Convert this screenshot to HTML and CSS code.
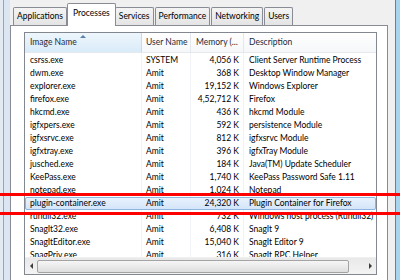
FILE: index.html
```html
<!DOCTYPE html>
<html lang="en">
<head>
    <meta charset="UTF-8">
    <title>Windows Task Manager - Processes</title>
    <link rel="stylesheet" href="styles.css">
</head>
<body>

<div class="window">
    <div class="frame-left"></div>

    <div class="main">
        <div class="tabs">
            <div class="tab">Applications</div>
            <div class="tab active">Processes</div>
            <div class="tab">Services</div>
            <div class="tab">Performance</div>
            <div class="tab">Networking</div>
            <div class="tab">Users</div>
        </div>

        <div class="panel">
            <div class="listview">
                <div class="lv-head">
                    <div class="hcol sorted">Image Name<span class="sort-arrow"></span></div>
                    <div class="hcol">User Name</div>
                    <div class="hcol">Memory (...</div>
                    <div class="hcol">Description</div>
                </div>

                <div class="lv-body" id="rows"></div>

                <div class="hscroll">
                    <span class="arrow arrow-left"></span>
                    <div class="track"><div class="thumb"></div></div>
                    <span class="arrow arrow-right"></span>
                </div>
            </div>
        </div>
    </div>

    <div class="frame-right"></div>
</div>

<!-- annotation lines drawn over the selected process -->
<div class="mark mark-top"></div>
<div class="mark mark-bottom"></div>

<script>
    const processes = [
        ['csrss.exe', 'SYSTEM', '4,056 K', 'Client Server Runtime Process'],
        ['dwm.exe', 'Amit', '368 K', 'Desktop Window Manager'],
        ['explorer.exe', 'Amit', '19,152 K', 'Windows Explorer'],
        ['firefox.exe', 'Amit', '4,52,712 K', 'Firefox'],
        ['hkcmd.exe', 'Amit', '436 K', 'hkcmd Module'],
        ['igfxpers.exe', 'Amit', '592 K', 'persistence Module'],
        ['igfxsrvc.exe', 'Amit', '812 K', 'igfxsrvc Module'],
        ['igfxtray.exe', 'Amit', '396 K', 'igfxTray Module'],
        ['jusched.exe', 'Amit', '184 K', 'Java(TM) Update Scheduler'],
        ['KeePass.exe', 'Amit', '1,740 K', 'KeePass Password Safe 1.11'],
        ['notepad.exe', 'Amit', '1,024 K', 'Notepad'],
        ['plugin-container.exe', 'Amit', '24,320 K', 'Plugin Container for Firefox'],
        ['rundll32.exe', 'Amit', '732 K', 'Windows host process (Rundll32)'],
        ['SnagIt32.exe', 'Amit', '6,408 K', 'SnagIt 9'],
        ['SnagItEditor.exe', 'Amit', '15,040 K', 'SnagIt Editor 9'],
        ['SnagPriv.exe', 'Amit', '316 K', 'SnagIt RPC Helper']
    ];

    const selected = 'plugin-container.exe';
    const rows = document.getElementById('rows');

    processes.forEach(p => {
        const row = document.createElement('div');
        row.className = p[0] === selected ? 'row selected' : 'row';
        row.innerHTML = `
            <span class="cell">${p[0]}</span>
            <span class="cell">${p[1]}</span>
            <span class="cell mem">${p[2]}</span>
            <span class="cell">${p[3]}</span>
        `;
        rows.appendChild(row);
    });
</script>

</body>
</html>
```

FILE: styles.css
```css
body {
    margin: 0;
    width: 400px;
    height: 280px;
    overflow: hidden;
    background: #f0f0f0;
    font-family: Lato, "Noto Sans", sans-serif;
    font-size: 8.5px;
    color: #000;
    position: relative;
}

.window {
    display: flex;
    height: 280px;
}

/* window frames on both sides */
.frame-left {
    width: 10px;
    flex-shrink: 0;
    background: linear-gradient(to right, #e3eaf2 0 3px, #97a5b5 3px 4px, #dbe6f2 4px);
}

.frame-right {
    width: 12px;
    flex-shrink: 0;
    background: linear-gradient(to right, #f0f0f0 0 7px, #6f7f90 7px 8px, #a8d4ee 8px);
}

.main {
    flex: 1;
    display: flex;
    flex-direction: column;
    min-width: 0;
}

/* tab strip */
.tabs {
    height: 25px;
    display: flex;
    align-items: flex-end;
    padding-left: 3px;
    position: relative;
    z-index: 1;
    white-space: nowrap;
}

.tab {
    height: 17px;
    line-height: 17px;
    padding: 0 3px;
    margin-right: 1px;
    border: 1px solid #898c95;
    border-bottom: none;
    border-radius: 2px 2px 0 0;
    background: linear-gradient(#f4f4f4, #e4e4e4);
    color: #000;
}

.tab.active {
    height: 22px;
    line-height: 18px;
    margin: 0 -1px -1px -1px;
    padding: 0 5px;
    background: #fff;
    position: relative;
}

/* tab page */
.panel {
    flex: 1;
    border: 1px solid #898c95;
    border-bottom: none;
    background: #fff;
    padding: 6px 10px 0 13px;
}

.listview {
    height: 241px;
    border: 1px solid #828790;
    display: flex;
    flex-direction: column;
    background: #fff;
}

.lv-head,
.row {
    display: grid;
    grid-template-columns: 117px 49px 53px 1fr;
    white-space: nowrap;
}

.lv-head {
    height: 19px;
    line-height: 19px;
    color: #1e2a3a;
    border-bottom: 1px solid #e5e8ec;
    background: linear-gradient(#ffffff, #f6f7f9);
}

.hcol {
    padding-left: 5px;
    border-right: 1px solid #e3e8ee;
    position: relative;
    overflow: hidden;
}

.hcol:nth-child(2) {
    padding-left: 4px;
}

.hcol:last-child {
    border-right: none;
}

.hcol.sorted {
    background: linear-gradient(#eef6fc, #d9ebf9);
    border-right-color: #c4dcef;
}

.sort-arrow {
    position: absolute;
    left: 55px;
    top: 2px;
    border-left: 3px solid transparent;
    border-right: 3px solid transparent;
    border-bottom: 3px solid #5a7fa8;
}

.lv-body {
    flex: 1;
    overflow: hidden;
    padding-top: 1px;
    background: linear-gradient(to right, transparent 116px, #f1f3f6 116px 117px, transparent 117px 165px, #f1f3f6 165px 166px, transparent 166px 218px, #f1f3f6 218px 219px, transparent 219px);
}

.row {
    height: 13px;
    line-height: 13px;
}

.row.selected {
    background: linear-gradient(#eaf3fd, #d2e4f9);
    outline: 1px solid #8fb4e0;
    outline-offset: -1px;
    border-radius: 2px;
}

.cell {
    padding-left: 5px;
    overflow: hidden;
}

.cell:nth-child(2) {
    padding-left: 4px;
}

.cell.mem {
    text-align: right;
    padding: 0 5px 0 0;
}

/* horizontal scrollbar */
.hscroll {
    height: 16px;
    display: flex;
    align-items: center;
    background: linear-gradient(#e9e9e9, #f3f3f3);
    border-top: 1px solid #f0f0f0;
}

.arrow {
    width: 12px;
    display: flex;
    justify-content: center;
}

.arrow-left::before {
    content: "";
    border-top: 3px solid transparent;
    border-bottom: 3px solid transparent;
    border-right: 3px solid #3c3c3c;
}

.arrow-right::before {
    content: "";
    border-top: 3px solid transparent;
    border-bottom: 3px solid transparent;
    border-left: 3px solid #3c3c3c;
}

.track {
    flex: 1;
    height: 13px;
}

.thumb {
    width: 310px;
    height: 11px;
    border: 1px solid #a3a3a3;
    border-radius: 2px;
    background: linear-gradient(#f6f6f6, #dedede);
}

/* red marker lines */
.mark {
    position: absolute;
    left: 0;
    width: 400px;
    height: 3px;
    background: #ff0000;
}

.mark-top {
    top: 193px;
}

.mark-bottom {
    top: 212px;
}
```
